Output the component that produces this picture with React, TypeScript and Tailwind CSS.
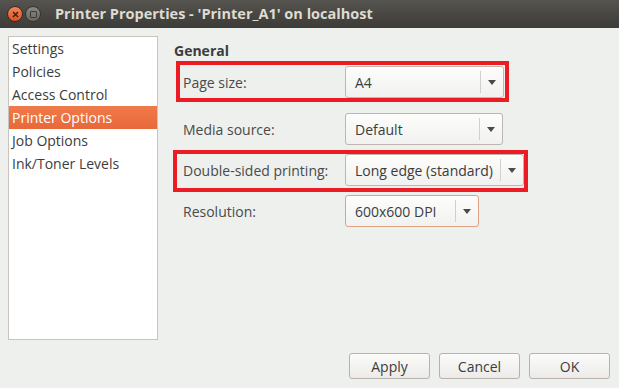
import React from "react";

const font = { fontFamily: '"Open Sans", "Noto Sans", "DejaVu Sans", sans-serif' };

const pages = ["Settings", "Policies", "Access Control", "Printer Options", "Job Options", "Ink/Toner Levels"];

function Combo({ value, width, focused }: { value: string; width: string; focused?: boolean }) {
  return (
    <div
      className={`${width} h-[32px] flex items-center rounded-[3px] border bg-gradient-to-b from-[#fdfdfc] to-[#f1f1ef] ${
        focused ? "border-[#e0a285]" : "border-[#bdb7b0]"
      }`}
    >
      <span className="flex-1 pl-[9px] text-[14px] text-[#3c3c3c] whitespace-nowrap">{value}</span>
      <span className="h-[22px] w-px bg-[#d3cfca]" />
      <span className="w-[22px] flex items-center justify-center">
        <svg width="8" height="5" viewBox="0 0 8 5">
          <path d="M0 0h8L4 5z" fill="#4a4a4a" />
        </svg>
      </span>
    </div>
  );
}

function Row({ label, children, className = "" }: { label: string; children: React.ReactNode; className?: string }) {
  return (
    <div className={`relative flex items-center pl-[9px] ${className}`}>
      <span className="w-[162px] text-[14px] text-[#4a4a4a] whitespace-nowrap">{label}</span>
      {children}
    </div>
  );
}

function Btn({ label }: { label: string }) {
  return (
    <button className="w-[81px] h-[26px] rounded-[3px] border border-[#b8b2ab] bg-gradient-to-b from-[#fbfbfa] to-[#ecebe9] text-[14px] text-[#3c3c3c]">
      {label}
    </button>
  );
}

export default function App() {
  return (
    <div className="w-[619px] h-[388px] flex flex-col bg-[#edf0ed] overflow-hidden" style={font}>
      {/* Title bar */}
      <div className="h-[28px] flex items-center bg-gradient-to-b from-[#55544f] to-[#3c3b37]">
        <div className="ml-[7px] w-[16px] h-[16px] rounded-full bg-gradient-to-b from-[#f58456] to-[#e0511b] border border-[#3a2a22] flex items-center justify-center">
          <svg width="7" height="7" viewBox="0 0 7 7">
            <path d="M1 1L6 6M6 1L1 6" stroke="#3b2418" strokeWidth="1.6" />
          </svg>
        </div>
        <div className="ml-[2px] w-[16px] h-[16px] rounded-full bg-gradient-to-b from-[#8a8882] to-[#6a6863] border border-[#35342f] flex items-center justify-center">
          <div className="w-[7px] h-[7px] border-[1.5px] border-[#3a3935] rounded-[1px]" />
        </div>
        <span className="ml-[14px] text-[14.5px] font-bold text-[#dfdbd2] whitespace-nowrap">
          Printer Properties - 'Printer_A1' on localhost
        </span>
      </div>

      {/* Body */}
      <div className="flex-1 flex">
        <div className="ml-[8px] mt-[8px] w-[150px] h-[304px] bg-white border border-[#c9c3bd]">
          {pages.map((p) => (
            <div
              key={p}
              className={`h-[23px] flex items-center pl-[3px] text-[14px] whitespace-nowrap ${
                p === "Printer Options"
                  ? "bg-gradient-to-b from-[#f07a4a] to-[#e8683a] text-white"
                  : "text-[#3c3c3c]"
              }`}
            >
              {p}
            </div>
          ))}
        </div>

        <div className="ml-[16px] pt-[13px]">
          <div className="h-[18px] flex items-center text-[14px] font-bold text-[#3c3c3c]">General</div>

          <Row label="Page size:" className="mt-[7px]">
            <Combo value="A4" width="w-[159px]" />
            <div className="absolute left-[2px] top-[-5px] w-[333px] h-[41px] border-[4px] border-[#ec1c24]" />
          </Row>
          <Row label="Media source:" className="mt-[15px]">
            <Combo value="Default" width="w-[158px]" />
          </Row>
          <Row label="Double-sided printing:" className="mt-[9px]">
            <Combo value="Long edge (standard)" width="w-[179px]" />
            <div className="absolute left-[-1px] top-[-4px] w-[355px] h-[42px] border-[4px] border-[#ec1c24]" />
          </Row>
          <Row label="Resolution:" className="mt-[9px]">
            <Combo value="600x600 DPI" width="w-[134px]" focused />
          </Row>
        </div>
      </div>

      {/* Buttons */}
      <div className="flex justify-end gap-[9px] pr-[9px] pb-[9px]">
        <Btn label="Apply" />
        <Btn label="Cancel" />
        <Btn label="OK" />
      </div>
    </div>
  );
}
